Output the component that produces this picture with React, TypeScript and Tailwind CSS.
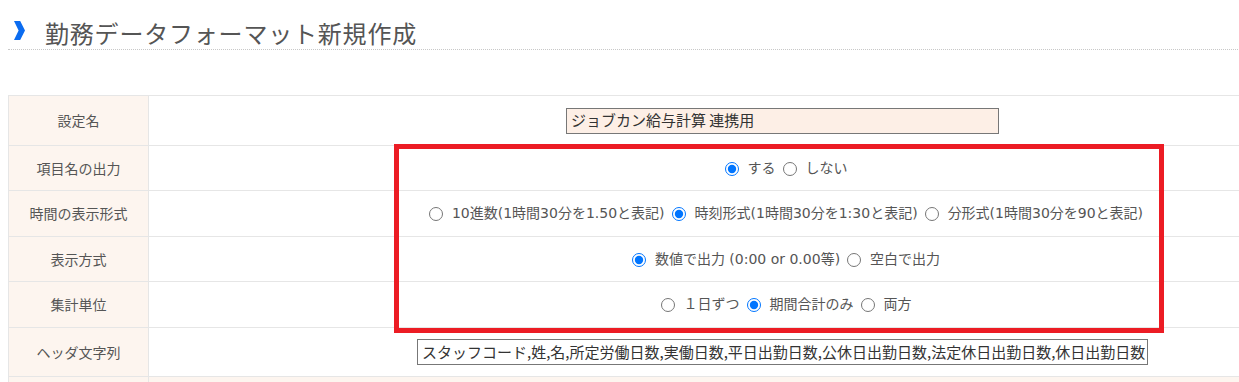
import type { ReactNode } from 'react';

const FONT = "font-['Noto_Sans_CJK_JP','Noto_Sans',sans-serif]";

type Opt = { label: string; checked?: boolean };

function RadioGroup({ name, options }: { name: string; options: Opt[] }) {
  return (
    <div className="flex items-center text-[14px] text-[#555] font-['DejaVu_Sans','Noto_Sans_CJK_JP',sans-serif]">
      {options.map((o) => (
        <label key={o.label} className="flex items-center">
          <input
            type="radio"
            name={name}
            defaultChecked={o.checked}
            className="w-[14px] h-[14px] ml-[7px] mr-[9px] mt-[1px]"
          />
          <span>{o.label}</span>
        </label>
      ))}
    </div>
  );
}

function Row({ label, h, children }: { label: string; h: string; children?: ReactNode }) {
  return (
    <div className={`flex border-b border-[#e6e6e6] ${h}`}>
      <div className="w-[140px] shrink-0 bg-[#fdf5ef] border-r border-[#e6e6e6] flex items-center justify-center text-[14px] text-[#555]">
        {label}
      </div>
      <div className="flex-1 flex items-center justify-center">{children}</div>
    </div>
  );
}

export default function App() {
  return (
    <div className={`w-full h-[382px] overflow-hidden bg-white ${FONT}`}>
      <div className="w-[1408px] ml-2">
        <div className="h-[50px] pt-[16px] flex items-center border-b border-dotted border-[#c8c8c8]">
          {/* heading chevron */}
          <svg width="11" height="19" viewBox="0 0 11 19" className="ml-[6px] mr-[20px] mb-[4px] shrink-0">
            <polygon points="0,0 6.2,0 11,9.5 6.2,19 0,19 4.6,9.5" fill="#0b6cf0" />
          </svg>
          <h1 className="text-[24px] tracking-[0.8px] text-[#555] leading-none">勤務データフォーマット新規作成</h1>
        </div>

        <div className="relative mt-[45px] border-t border-l border-[#e6e6e6]">
          <Row label="設定名" h="h-[50px]">
            <div className="w-[433px] h-[26px] bg-[#fdefe6] border border-[#777] flex items-center px-[4px] text-[15px] text-[#333]">
              ジョブカン給与計算 連携用
            </div>
          </Row>
          <Row label="項目名の出力" h="h-[45px]">
            <RadioGroup
              name="itemName"
              options={[{ label: 'する', checked: true }, { label: 'しない' }]}
            />
          </Row>
          <Row label="時間の表示形式" h="h-[46px]">
            <RadioGroup
              name="timeFormat"
              options={[
                { label: '10進数(1時間30分を1.50と表記)' },
                { label: '時刻形式(1時間30分を1:30と表記)', checked: true },
                { label: '分形式(1時間30分を90と表記)' },
              ]}
            />
          </Row>
          <Row label="表示方式" h="h-[45px]">
            <RadioGroup
              name="display"
              options={[{ label: '数値で出力 (0:00 or 0.00等)', checked: true }, { label: '空白で出力' }]}
            />
          </Row>
          <Row label="集計単位" h="h-[46px]">
            <RadioGroup
              name="unit"
              options={[{ label: '１日ずつ' }, { label: '期間合計のみ', checked: true }, { label: '両方' }]}
            />
          </Row>
          <Row label="ヘッダ文字列" h="h-[49px]">
            <div className="w-[731px] h-[26px] bg-white border border-[#777] flex items-center px-[4px] text-[15px] text-[#333] whitespace-nowrap">
              スタッフコード,姓,名,所定労働日数,実働日数,平日出勤日数,公休日出勤日数,法定休日出勤日数,休日出勤日数
            </div>
          </Row>
          <div className="h-[40px] bg-[#fdf5ef] flex">
            <div className="w-[140px] border-r border-[#e6e6e6]" />
          </div>

          <div className="absolute left-[385px] top-[48px] w-[770px] h-[189px] border-[5px] border-[#ec1c24] pointer-events-none" />
        </div>
      </div>
    </div>
  );
}
